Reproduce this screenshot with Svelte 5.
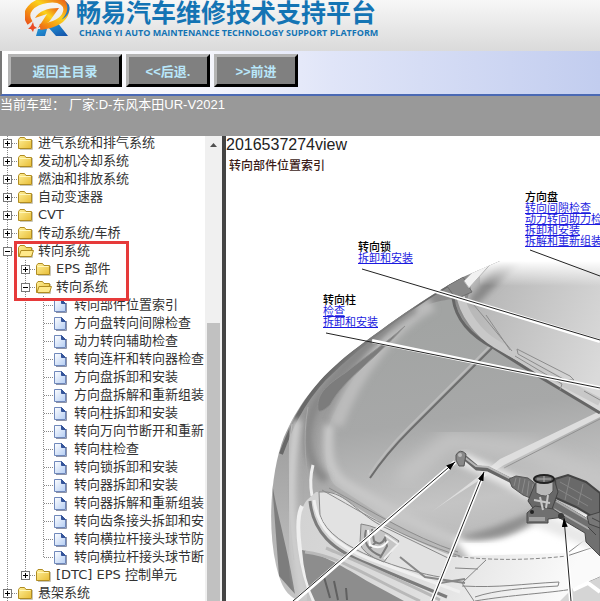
<script lang="ts">
  type Row = {
    depth: number;
    kind: 'closed' | 'open' | 'page';
    label: string;
    last?: boolean;
  };

  const rows: Row[] = [
    { depth: 0, kind: 'closed', label: '进气系统和排气系统' },
    { depth: 0, kind: 'closed', label: '发动机冷却系统' },
    { depth: 0, kind: 'closed', label: '燃油和排放系统' },
    { depth: 0, kind: 'closed', label: '自动变速器' },
    { depth: 0, kind: 'closed', label: 'CVT' },
    { depth: 0, kind: 'closed', label: '传动系统/车桥' },
    { depth: 0, kind: 'open', label: '转向系统' },
    { depth: 1, kind: 'closed', label: 'EPS 部件' },
    { depth: 1, kind: 'open', label: '转向系统' },
    { depth: 2, kind: 'page', label: '转向部件位置索引' },
    { depth: 2, kind: 'page', label: '方向盘转向间隙检查' },
    { depth: 2, kind: 'page', label: '动力转向辅助检查' },
    { depth: 2, kind: 'page', label: '转向连杆和转向器检查' },
    { depth: 2, kind: 'page', label: '方向盘拆卸和安装' },
    { depth: 2, kind: 'page', label: '方向盘拆解和重新组装' },
    { depth: 2, kind: 'page', label: '转向柱拆卸和安装' },
    { depth: 2, kind: 'page', label: '转向万向节断开和重新' },
    { depth: 2, kind: 'page', label: '转向柱检查' },
    { depth: 2, kind: 'page', label: '转向锁拆卸和安装' },
    { depth: 2, kind: 'page', label: '转向器拆卸和安装' },
    { depth: 2, kind: 'page', label: '转向器拆解和重新组装' },
    { depth: 2, kind: 'page', label: '转向齿条接头拆卸和安' },
    { depth: 2, kind: 'page', label: '转向横拉杆接头球节防' },
    { depth: 2, kind: 'page', label: '转向横拉杆接头球节断', last: true },
    { depth: 1, kind: 'closed', label: '[DTC] EPS 控制单元', last: true },
    { depth: 0, kind: 'closed', label: '悬架系统' }
  ];

  // callouts sit on the drawing, measured from its top left corner
  const callouts = [
    { x: 299, y: 16, title: '方向盘', links: ['转向间隙检查', '动力转向助力检', '拆卸和安装', '拆解和重新组装'] },
    { x: 132, y: 66, title: '转向锁', links: ['拆卸和安装'] },
    { x: 97, y: 119, title: '转向柱', links: ['检查', '拆卸和安装'] }
  ];
</script>

{#snippet guide(last: boolean, branch: boolean)}
  <svg class="cell" viewBox="0 0 18 18" aria-hidden="true">
    <path d={last ? 'M7.5 0V9' : 'M7.5 0V18'} />
    {#if branch}<path d="M8 9.5H18" />{/if}
  </svg>
{/snippet}

{#snippet folder(open: boolean)}
  <svg class="icon" viewBox="0 0 16 18" aria-hidden="true">
    <path d="M2 15.5H14.5V6" fill="none" stroke="#c9c6b8" />
    <path d="M.5 5.5 2 3.5H6.5L8 5.5H13.500V14.500H.5Z" fill="url(#gold)" stroke="#b08c22" />
    {#if open}
      <path d="M3 8.500H15.500L13.500 14.500H1Z" fill="#ffe98a" stroke="#b08c22" />
    {:else}
      <path d="M1.500 6.500H12.500" stroke="#fff6b8" />
    {/if}
  </svg>
{/snippet}

<div class="app">
  <header class="brand">
    <svg class="logo" viewBox="0 0 46 38" role="img" aria-label="logo">
      <defs>
        <linearGradient id="fire" x1="0" y1="1" x2="1" y2="0">
          <stop offset="0" stop-color="#e8481c" />
          <stop offset=".35" stop-color="#f59a12" />
          <stop offset=".6" stop-color="#fbd21c" />
          <stop offset="1" stop-color="#ea5a18" />
        </linearGradient>
        <linearGradient id="sea" x1="0" y1="0" x2="1" y2="1">
          <stop offset="0" stop-color="#29b0e8" />
          <stop offset="1" stop-color="#1350a8" />
        </linearGradient>
      </defs>
      <path d="M13 29H22L20 36H11ZM23 27 32 22 43 36H31Z" fill="url(#sea)" />
      <path d="M5 23C-3 12 8 2 22 0 36-2 43 4 41 12 39 20 30 25 15 27" fill="none" stroke="url(#fire)" stroke-width="6" />
      <path d="M10 18C14 11 22 8 34 8L24 22 13 28 22 14Z" fill="url(#fire)" />
      <path d="M40 1C44 6 43 14 36 20 42 17 46 11 44 5Z" fill="#2277c2" />
      <path d="M8 22 9 26 12 28 9 29 8 32 6 29 3 29 6 26Z" fill="#ea4c24" />
    </svg>
    <div class="names">
      <h1>畅易汽车维修技术支持平台</h1>
      <p>CHANG YI AUTO MAINTENANCE TECHNOLOGY SUPPORT PLATFORM</p>
    </div>
  </header>

  <nav class="toolbar">
    <button class="wide">返回主目录</button>
    <button>&lt;&lt;后退.</button>
    <button>&gt;&gt;前进</button>
  </nav>

  <div class="status"><span>当前车型：</span><span>厂家:D-东风本田UR-V2021</span></div>

  <div class="panes">
    <aside>
      <ul class="tree">
        {#each rows as row}
          <li>
            {#each Array(row.depth) as _, level}
              {@render guide(false, false)}
            {/each}
            {#if row.kind === 'page'}
              {@render guide(!!row.last, true)}
              <svg class="icon" viewBox="0 0 16 18" aria-hidden="true">
                <path d="M2 16.500H12.500V7" fill="none" stroke="#8d93a8" />
                <path d="M.5 3.500H7.500L11.500 7.500V15.500H.5Z" fill="url(#sheet)" stroke="#6f88bb" />
                <path d="M7.500 3.500V7.500H11.500Z" fill="#34549a" stroke="#34549a" />
              </svg>
            {:else}
              <button class="toggle" aria-label={row.kind === 'open' ? '折叠' : '展开'}>
                <svg class="cell" viewBox="0 0 18 18" aria-hidden="true">
                  <path d={row.last ? 'M7.5 0V9' : 'M7.5 0V18'} />
                  <path d="M12 9.500H18" />
                  <rect x="3.500" y="5.500" width="8" height="8" />
                  <path class="sign" d={row.kind === 'open' ? 'M5 9.500H10' : 'M5 9.500H10M7.500 7V12'} />
                </svg>
              </button>
              {@render folder(row.kind === 'open')}
            {/if}
            <span>{row.label}</span>
          </li>
        {/each}
      </ul>
      <div class="highlight"></div>
      <div class="scrollbar">
        <svg viewBox="0 0 17 17" aria-hidden="true"><path d="M5 11 8.500 7 12 11Z" fill="#505050" /></svg>
        <div class="thumb"></div>
      </div>
    </aside>

    <main>
      <p class="view-id">2016537274view</p>
      <h2>转向部件位置索引</h2>
      <figure>
        <svg class="drawing" viewBox="226 176 374 425" preserveAspectRatio="xMinYMin slice" role="img" aria-label="转向部件位置">
          <defs>
            <linearGradient id="gold" x1="0" y1="0" x2="1" y2="1">
              <stop offset="0" stop-color="#fff09a" />
              <stop offset="1" stop-color="#e8bd35" />
            </linearGradient>
            <linearGradient id="sheet" x1="0" y1="0" x2="1" y2="1">
              <stop offset="0" stop-color="#fff" />
              <stop offset="1" stop-color="#b4cdf3" />
            </linearGradient>
            <linearGradient id="body" x1="0" y1="0" x2="0" y2="1">
              <stop offset="0" stop-color="#858585" />
              <stop offset=".45" stop-color="#999" />
              <stop offset="1" stop-color="#c4c4c4" />
            </linearGradient>
            <linearGradient id="hood" gradientUnits="userSpaceOnUse" x1="440" y1="320" x2="480" y2="560">
              <stop offset="0" stop-color="#a2a4a3" />
              <stop offset=".4" stop-color="#a7a8a8" />
              <stop offset=".75" stop-color="#c4c4c4" />
              <stop offset="1" stop-color="#b5b5b5" />
            </linearGradient>
            <linearGradient id="glass" gradientUnits="userSpaceOnUse" x1="480" y1="320" x2="600" y2="370">
              <stop offset="0" stop-color="#b9b9b9" />
              <stop offset="1" stop-color="#dadada" />
            </linearGradient>
            <linearGradient id="fade" x1="0" y1="0" x2="0" y2="1">
              <stop offset="0" stop-color="#fff" />
              <stop offset="1" stop-color="#fff" stop-opacity="0" />
            </linearGradient>
            <linearGradient id="bumper" gradientUnits="userSpaceOnUse" x1="300" y1="490" x2="560" y2="601">
              <stop offset="0" stop-color="#d2d2d2" />
              <stop offset=".5" stop-color="#dedede" />
              <stop offset="1" stop-color="#fafafa" />
            </linearGradient>
            <filter id="soft"><feGaussianBlur stdDeviation="3" /></filter>
            <filter id="wide" x="-20%" y="-20%" width="140%" height="140%"><feGaussianBlur stdDeviation="8" /></filter>
            <clipPath id="hull">
              <path d="M600 261H500L463 277C430 294 380 330 345 357 315 382 297 407 284 437 271 470 267 525 276 565 282 590 287 594 298 601H600Z" />
            </clipPath>
            <marker id="tip" markerWidth="9" markerHeight="6" refX="9" refY="3" orient="auto" markerUnits="userSpaceOnUse">
              <path d="M0 0 9 3 0 6Z" fill="#000" />
            </marker>
          </defs>

          <g clip-path="url(#hull)">
            <path d="M226 250H600V601H226Z" fill="url(#body)" />
            <path d="M478 261H600V412L562 391 494 348 471 327 466 304Z" fill="url(#glass)" />
            <path d="M468 300 502 258H522L476 306Z" fill="#888" filter="url(#soft)" />
            <path d="M480 261H600V286H480Z" fill="url(#fade)" />

            <!-- bonnet -->
            <path d="M454 299C440 300 415 306 395 324 365 360 340 395 327 430 324 458 326 477 336 486L395 524 455 556 600 558V412L562 391 494 348C472 335 460 320 454 299Z" fill="url(#hood)" />
            <path d="M432 304C395 322 355 372 336 425" stroke="#bcbcbc" stroke-width="14" filter="url(#soft)" />
            <path d="M329 425C326 455 328 475 350 487 400 515 430 532 460 542" stroke="#c8c8c8" stroke-width="10" filter="url(#soft)" />
            <path d="M454 538C500 545 520 532 560 510L600 515V560H470Z" fill="#fff" filter="url(#soft)" />
            <path d="M462 536C495 530 520 515 545 508 525 530 500 542 462 539Z" fill="#8e8e8e" filter="url(#soft)" />
            <path d="M400 480 450 440 530 450 600 480" stroke="#c6c6c6" stroke-width="16" filter="url(#wide)" />
            <path d="M493 347 410 430Q386 454 370 478" stroke="#6d6d6d" stroke-width="2" />
            <path d="M491 345 408 428Q384 452 369 475" stroke="#bcbcbc" stroke-width="2" />
            <path d="M600 417 504 465Q455 495 430 513 475 480 500 459L600 411Z" fill="#dedede" />
            <path d="M600 419 504 468" stroke="#929292" />

            <!-- wing and lamp -->
            <path d="M462 277C420 300 365 339 325 378 300 405 290 430 281 454" stroke="#686868" stroke-width="4" />
            <path d="M415 308C375 334 340 368 318 401 300 432 308 465 326 480" stroke="#858585" stroke-width="8" filter="url(#soft)" />
            <path d="M318 410C316 395 325 386 345 373 365 357 385 344 405 326 370 364 343 380 330 405Q320 414 318 410Z" fill="#7c7c7c" stroke="#909090" />
            <path d="M292 424C285 465 289 520 294 560M308 407C302 440 306 470 312 497" stroke="#a8a8a8" />
            <path d="M272 482C276 510 288 550 295 594L279 576Z" fill="#7d7d7d" />
            <path d="M297 420C286 490 291 540 305 601" stroke="#d0d0d0" stroke-width="9" filter="url(#soft)" />
            <path d="M313 465Q309 480 312 496" stroke="#eee" stroke-width="3" />

            <!-- scuttle and wiper -->
            <path d="M453 298C456 321 473 337 494 348L535 374 600 413" stroke="#666" stroke-width="3" />
            <path d="M460 292C462 313 479 334 496 344L562 382 600 402" stroke="#c8c8c8" stroke-width="8" />
            <path d="M469 299 512 351M486 315 510 350M517 349 570 376 574 380 565 380 518 354ZM515 356 562 384 560 390M584 391 600 400" stroke="#8c8c8c" />
            <path d="M447 286 463 277 472 292 456 299Z" fill="#888" stroke="#6d6d6d" />
            <path d="M464 281 486 258H496L469 288Z" fill="#f1f1f1" stroke="#b5b5b5" />

            <!-- grille, badge and bumper -->
            <path d="M307 500 316 492 336 493C370 518 410 540 455 557L470 556 600 552V601H312C298 560 294 515 307 500Z" fill="url(#bumper)" />
            <path d="M319 492C345 490 353 510 380 525L448 558 440 577C410 572 330 550 320 515Z" fill="#e2e2e2" stroke="#888" />
            <path d="M322 490C365 514 400 537 460 556M329 488C370 510 410 536 458 552" stroke="#8c8c8c" />
            <path d="M310 501C313 532 332 550 368 564L447 597" stroke="#7c7c7c" stroke-width="3" />
            <path d="M314 500C318 529 335 545 370 559L460 592" stroke="#f0f0f0" stroke-width="3" />
            <path d="M302 506C294 521 300 570 314 601" stroke="#efefef" stroke-width="4" />
            <path d="M302 550C320 553 346 568 367 581L404 601H315Q304 580 302 550Z" fill="#8d8d8d" />
            <path d="M305 552C340 556 370 578 420 601M326 548C365 565 400 580 440 600" stroke="#b9b9b9" stroke-width="3" />
            <path d="M324 577 330 598M334 581 338 600M346 588 347 600" stroke="#606060" stroke-width="2" />
            <path d="M361 524Q378 526 399 541L384 562Q362 554 360 543Z" fill="#c5c5c5" stroke="#858585" />
            <path d="M366 530Q361 548 381 556M372 529 374 541Q381 547 385 538L387 546 380 558M369 549 376 542" stroke="#7c7c7c" stroke-width="2" />
            <path d="M368 530 370 545Q381 551 388 541" stroke="#fafafa" stroke-width="2" />
            <path d="M385 535 398 544 384 559" stroke="#eee" stroke-width="2" />
            <path d="M400 557 425 577 465 583M440 583 465 579" stroke="#888" stroke-width="2" />
            <path d="M452 556C495 561 530 560 567 556" stroke="#888" stroke-dasharray="4 2" />
            <path d="M486 560 462 583 474 601M455 568 478 569M567 556 600 545M569 552 586 539M462 586C500 588 520 584 559 582L558 586C525 588 495 590 475 597M475 601C510 595 550 593 573 589L600 577" stroke="#858585" />
            <path d="M572 589 600 577V601H560Z" fill="#d5d5d5" />
            <path d="M573 590 588 583 600 592" stroke="#fff" stroke-width="4" />
          </g>

          <!-- leader lines -->
          <g class="leader halo">
            <path d="M432 290 600 341M372 341 600 388M295 601 455 462M432 601 484 472M571 601 564 519" />
          </g>
          <g class="leader">
            <path d="M530 250 600 276M362 269 600 340M326 333 600 388" />
          </g>

          <!-- steering gear with a light halo -->
          <path d="M460 458 482 468 508 480 530 492 570 490 600 510M535 518 600 545" stroke="#e8e8e8" stroke-width="14" stroke-linejoin="round" filter="url(#soft)" />
          <path d="M459 461 464 457 477 468 488 469 512 481" stroke="#666" stroke-width="5" stroke-linejoin="round" />
          <path d="M460 459 464 457 476 466 488 467 513 480" stroke="#b7b7b7" stroke-width="2" />
          <path d="M456 455Q460 448 466 454L464 466H459L456 460Z" fill="#888" stroke="#555" />
          <circle cx="460" cy="455" r="2" fill="#bbb" />
          <path d="M509 479 516 476 528 478 537 485 535 500 523 495 512 487Z" fill="#707070" stroke="#555" />
          <path d="M516 478 514 486M520 478 518 490M525 479 522 493M529 481 527 496M533 484 531 499" stroke="#8c8c8c" />
          <path d="M555 479 568 475 586 482 600 493V521L576 507 556 498Z" fill="#696969" stroke="#444" stroke-width="2" />
          <path d="M560 482 592 500M558 489 588 506M570 477 565 500M583 484 578 505" stroke="#858585" />
          <path d="M550 497 600 526V556L586 542 585 533 553 514Z" fill="#707070" stroke="#484848" />
          <path d="M556 501 595 524M554 509 589 529" stroke="#aaa" stroke-width="2" />
          <path d="M535 484 554 479 558 492 551 512 537 514 528 501Z" fill="#686868" stroke="#444" />
          <path d="M536 480V493Q547 500 553 491V479" fill="#b9b9b9" stroke="#555" />
          <ellipse cx="544" cy="479" rx="10" ry="4" fill="#666" stroke="#222" stroke-width="2" />
          <path d="M537 479H551M544 476V482" stroke="#aaa" />
          <path d="M527 513 535 506 553 509 565 517 548 519V523H527Z" fill="#707070" stroke="#484848" />
          <path d="M529 517H545V521H529Z" fill="#a2a2a2" />
          <circle cx="532" cy="512" r="2" fill="#222" />
          <circle cx="561" cy="516" r="3" fill="#3a3a3a" />
          <path d="M540 497 543 510M548 495 546 508M534 500 550 503" stroke="#c7c7c7" stroke-width="2" />
          <path d="M587 516 600 512V528L589 524ZM588 527 596 535M592 518 600 522" fill="#777" stroke="#444" />

          <g class="leader">
            <path d="M293 601 455 462" marker-end="url(#tip)" />
            <path d="M432 601 484 472" marker-end="url(#tip)" />
            <path d="M571 601 564 518" marker-end="url(#tip)" />
          </g>
        </svg>

        {#each callouts as note}
          <div class="callout" style="left: {note.x}px; top: {note.y}px">
            <strong>{note.title}</strong>
            {#each note.links as link}
              <a href="#top">{link}</a>
            {/each}
          </div>
        {/each}
      </figure>
    </main>
  </div>
</div>

<style>
:global(body) {
  margin: 0;
  overflow: hidden;
}

.app {
  display: flex;
  flex-direction: column;
  height: 100vh;
  font-family: "Liberation Sans", "Noto Sans CJK SC", sans-serif;
  font-size: 13px;
}

.brand {
  display: flex;
  flex: none;
  height: 51px;
  padding-left: 25px;
  gap: 5px;
  overflow: hidden;
  background: linear-gradient(#f7f7f7, #dadada);
}

.logo {
  flex: none;
  width: 46px;
  height: 38px;
}

.names {
  color: #1474b4;
  white-space: nowrap;
}

h1 {
  margin: 0;
  font-size: 25px;
  font-weight: 700;
  line-height: 26px;
}

.names p {
  margin: 0;
  padding-left: 3px;
  font-family: "Open Sans", sans-serif;
  font-size: 9px;
  font-weight: 700;
  line-height: 14px;
}

.toolbar {
  display: flex;
  flex: none;
  gap: 4px;
  height: 40px;
  padding: 3px 0 0 6px;
  border-left: 2px solid #777;
  border-bottom: 2px solid #4a69b4;
  background: linear-gradient(90deg, #fff, #f4f5fc 35%, #e0e5f8 55%, #c2cdef);
}

.toolbar button {
  box-sizing: border-box;
  width: 84px;
  height: 33px;
  padding: 0;
  border: 3px solid;
  border-color: #b4b4b4 #000 #000 #b4b4b4;
  background: #808080;
  color: #b9e7fa;
  font: 700 13px "Liberation Sans", "Noto Sans CJK SC", sans-serif;
}

.toolbar .wide {
  width: 114px;
}

.status {
  display: flex;
  flex: none;
  gap: 4px;
  height: 40px;
  background: #999;
  color: #fff;
  line-height: 18px;
}

.panes {
  display: flex;
  flex: 1;
  min-height: 0;
}

aside {
  position: relative;
  display: flex;
  flex: none;
  width: 222px;
  overflow: hidden;
}

.tree {
  flex: 1;
  min-width: 0;
  margin: -2px 0 0;
  padding: 0;
  overflow: hidden;
  list-style: none;
  color: #333;
  font-family: "DejaVu Sans", "Noto Sans CJK SC", sans-serif;
}

li {
  display: flex;
  height: 18px;
  line-height: 18px;
  white-space: nowrap;
}

li span {
  padding-left: 4px;
}

.cell {
  display: block;
  flex: none;
  width: 18px;
  height: 18px;
  fill: none;
  stroke: #888;
  stroke-dasharray: 1 1;
}

.cell rect {
  fill: #fff;
  stroke: #777;
  stroke-dasharray: none;
}

.cell .sign {
  stroke: #000;
  stroke-dasharray: none;
}

.toggle {
  flex: none;
  padding: 0;
  border: 0;
  background: none;
}

.icon {
  flex: none;
  width: 16px;
  height: 18px;
}

.highlight {
  position: absolute;
  top: 105px;
  left: 14px;
  width: 109px;
  height: 54px;
  border: 3px solid #e63a3a;
}

.scrollbar {
  display: flex;
  flex: none;
  flex-direction: column;
  width: 17px;
  background: #f0f0f0;
}

.scrollbar svg {
  width: 17px;
  height: 17px;
}

.thumb {
  flex: 1;
  margin: 170px 2px 0;
  background: #c1c1c1;
}

main {
  display: flex;
  flex: 1;
  flex-direction: column;
  min-width: 0;
  overflow: hidden;
  border-left: 4px solid #444;
  background: #fff;
}

.view-id {
  margin: 0;
  color: #222;
  font-size: 16px;
  line-height: 18px;
}

h2 {
  margin: 0;
  padding: 2px 3px 0;
  color: #3c1c18;
  font-size: 12px;
  font-weight: 500;
  line-height: 20px;
}

figure {
  position: relative;
  flex: 1;
  min-height: 0;
  margin: 0;
}

.drawing {
  display: block;
  width: 100%;
  height: 100%;
  fill: none;
}

.leader {
  stroke: #222;
}

.halo {
  stroke: #fff;
  stroke-width: 4px;
}

.callout {
  position: absolute;
  display: flex;
  flex-direction: column;
  font-size: 11px;
  line-height: 11px;
  white-space: nowrap;
}

.callout strong {
  font-weight: 500;
}

.callout a {
  color: #1a1ae0;
}
</style>
